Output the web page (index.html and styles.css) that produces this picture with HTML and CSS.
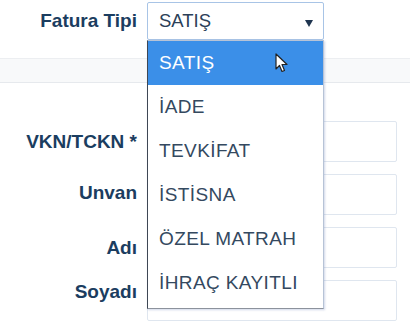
FILE: index.html
```html
<!DOCTYPE html>
<html lang="tr">
  <head>
    <meta charset="UTF-8" />
    <meta name="viewport" content="width=device-width, initial-scale=1.0" />
    <title>Fatura</title>
    <link rel="stylesheet" href="styles.css">
  </head>
  <body>
    <div class="form-row top-row">
      <label class="label">Fatura Tipi</label>
      <div class="select">
        <span class="select-value">SATIŞ</span>
        <span class="caret"></span>
        <ul class="dropdown">
          <li class="active">SATIŞ</li>
          <li>İADE</li>
          <li>TEVKİFAT</li>
          <li>İSTİSNA</li>
          <li>ÖZEL MATRAH</li>
          <li>İHRAÇ KAYITLI</li>
        </ul>
        <svg class="cursor" width="14" height="21" viewBox="0 0 14 21">
          <path d="M1 1 L1 16 L4.5 12.5 L7 18.5 L9.5 17.5 L7 11.5 L12 11.5 Z" fill="#fff" stroke="#222" stroke-width="1.2" stroke-linejoin="round"/>
        </svg>
      </div>
    </div>

    <div class="band"></div>

    <div class="fields">
      <div class="form-row">
        <label class="label">VKN/TCKN *</label>
        <div class="input"></div>
      </div>
      <div class="form-row">
        <label class="label">Unvan</label>
        <div class="input"></div>
      </div>
      <div class="form-row">
        <label class="label">Adı</label>
        <div class="input"></div>
      </div>
      <div class="form-row last">
        <label class="label">Soyadı</label>
        <div class="input"></div>
      </div>
    </div>
  </body>
</html>
```

FILE: styles.css
```css
/* Global */
body {
  margin: 0;
  padding: 0;
  background-color: #fff;
  font-family: "Liberation Sans", Arial, sans-serif;
  width: 410px;
  overflow: hidden;
}

/* Rows */
.form-row {
  display: flex;
  align-items: flex-start;
  gap: 10px;
}

.label {
  width: 137px;
  flex-shrink: 0;
  text-align: right;
  font-size: 19px;
  font-weight: bold;
  color: #1b3d60;
  padding-top: 10px;
  line-height: 22px;
}

.top-row {
  padding-top: 2px;
}

.top-row .label {
  padding-top: 8px;
}

/* Select */
.select {
  position: relative;
  width: 177px;
  height: 38px;
  box-sizing: border-box;
  border: 1px solid #a8c4e6;
  border-radius: 2px;
  display: flex;
  align-items: center;
  padding-left: 11px;
  font-size: 18.5px;
  color: #2b4058;
}

.caret {
  position: absolute;
  right: 10px;
  top: 17px;
  border-left: 4px solid transparent;
  border-right: 4px solid transparent;
  border-top: 7px solid #1f3550;
}

.dropdown {
  position: absolute;
  top: 37px;
  left: -1px;
  width: 177px;
  box-sizing: border-box;
  margin: 0;
  padding: 0 0 3px;
  list-style: none;
  background-color: #fff;
  border: 1px solid #b7c3d6;
  border-left-color: #3e4754;
  border-bottom-color: #8c929c;
  box-shadow: 1px 1px 2px rgba(120, 140, 190, 0.35);
  z-index: 5;
}

.dropdown li {
  height: 44px;
  line-height: 44px;
  padding-left: 11px;
  font-size: 19px;
  letter-spacing: 0.4px;
  color: #34495f;
}

.dropdown li.active {
  background-color: #3b8fe8;
  color: #fff;
}

.cursor {
  position: absolute;
  left: 127px;
  top: 50px;
  z-index: 6;
}

/* Grey band */
.band {
  margin-top: 18px;
  height: 23px;
  background-color: #f8f9fa;
  border-top: 1px solid #eceef1;
  border-bottom: 1px solid #e6e9ed;
}

/* Fields */
.fields {
  margin-top: 38px;
  display: flex;
  flex-direction: column;
  gap: 12px;
}

.fields .label {
  padding-top: 10px;
}

.fields .form-row:nth-child(2) .label {
  padding-top: 8px;
}

.fields .last .label {
  padding-top: 1px;
}

.input {
  width: 250px;
  height: 41px;
  box-sizing: border-box;
  border: 1px solid #dfe6ef;
  border-radius: 2px;
  background-color: #fff;
}
```
